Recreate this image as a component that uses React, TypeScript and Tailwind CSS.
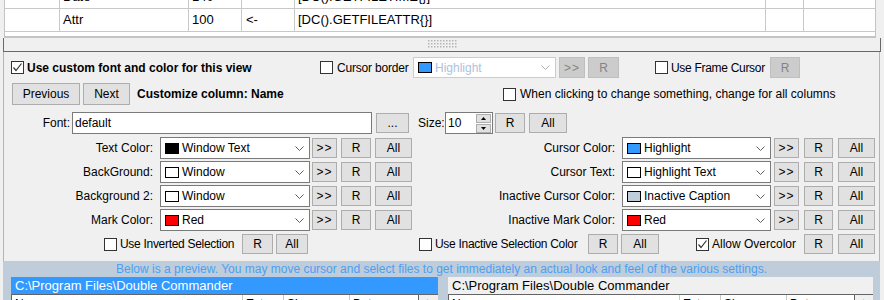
import React from "react";
import clsx from "clsx";

// ---- small win32-like controls ----

function Check({ checked = false }: { checked?: boolean }) {
  return (
    <div className="w-[13px] h-[13px] shrink-0 bg-white border border-[#333333] flex items-center justify-center">
      {checked && (
        <svg width="11" height="11" viewBox="0 0 11 11">
          <polyline points="1.5,5.5 4,8.5 9.5,1.5" fill="none" stroke="#333333" strokeWidth="1.2" />
        </svg>
      )}
    </div>
  );
}

function Btn({ className, disabled, children }: { className?: string; disabled?: boolean; children: React.ReactNode }) {
  return (
    <div
      className={clsx(
        "shrink-0 flex items-center justify-center border",
        disabled ? "bg-[#cccccc] border-[#bfbfbf] text-[#838383]" : "bg-[#e1e1e1] border-[#adadad] text-black",
        className
      )}
    >
      {children}
    </div>
  );
}

function Chevron({ color = "#606060" }: { color?: string }) {
  return (
    <svg width="9" height="5" viewBox="0 0 9 5" className="shrink-0">
      <polyline points="0.5,0.5 4.5,4.5 8.5,0.5" fill="none" stroke={color} strokeWidth="1" />
    </svg>
  );
}

function Combo({
  className,
  swatch,
  label,
  disabled,
}: {
  className?: string;
  swatch: string;
  label: string;
  disabled?: boolean;
}) {
  return (
    <div
      className={clsx(
        "shrink-0 flex items-center bg-white border",
        disabled ? "border-[#cccccc]" : "border-[#7a7a7a]",
        className
      )}
    >
      <div className="ml-[4px] w-[14px] h-[11px] border border-black shrink-0" style={{ backgroundColor: swatch }} />
      <span className={clsx("ml-[3px] flex-1 whitespace-nowrap", disabled ? "text-[#aec2dc]" : "text-black")}>{label}</span>
      <div className="mr-[5px] flex">
        <Chevron color={disabled ? "#b0b0b0" : "#606060"} />
      </div>
    </div>
  );
}

type ColorRow = { label: string; swatch: string; value: string };

const leftRows: ColorRow[] = [
  { label: "Text Color:", swatch: "#000000", value: "Window Text" },
  { label: "BackGround:", swatch: "#ffffff", value: "Window" },
  { label: "Background 2:", swatch: "#ffffff", value: "Window" },
  { label: "Mark Color:", swatch: "#ff0000", value: "Red" },
];

const rightRows: ColorRow[] = [
  { label: "Cursor Color:", swatch: "#3399ff", value: "Highlight" },
  { label: "Cursor Text:", swatch: "#ffffff", value: "Highlight Text" },
  { label: "Inactive Cursor Color:", swatch: "#bfcddb", value: "Inactive Caption" },
  { label: "Inactive Mark Color:", swatch: "#ff0000", value: "Red" },
];

// column-setup grid at the top (scrolled down, first row half hidden)
const gridRows = [
  ["", "Date", "140", "->", "[DC().GETFILETIME{}]", "", ""],
  ["", "Attr", "100", "<-", "[DC().GETFILEATTR{}]", "", ""],
];

function PreviewPanel({ active }: { active: boolean }) {
  return (
    <div className={clsx("flex flex-col shrink-0", active ? "w-[427px]" : "w-[425px]")}>
      <div
        className={clsx(
          "h-[17px] pl-[4px] flex items-center whitespace-nowrap text-[13px]",
          active ? "bg-[#3399ff] text-white" : "bg-[#f0f0f0] text-black"
        )}
      >
        C:\Program Files\Double Commander
      </div>
      <div className="flex h-[20px] bg-white border-t border-l border-[#646464]">
        <div className="w-[231px] border-r border-[#c8c8c8] pl-[3px] pt-[1px]">Name</div>
        <div className="w-[41px] border-r border-[#c8c8c8] pl-[3px] pt-[1px] overflow-hidden whitespace-nowrap">Exten</div>
        <div className="w-[66px] border-r border-[#c8c8c8] pl-[3px] pt-[1px]">Size</div>
        <div className={clsx("border-r border-[#646464] pl-[3px] pt-[1px]", active ? "w-[69px]" : "w-[68px]")}>Date</div>
        <div className="flex-1 bg-[#f0f0f0] pl-[5px]">+</div>
      </div>
    </div>
  );
}

export default function App() {
  return (
    <div className="w-[884px] h-[300px] overflow-hidden bg-[#f0f0f0] text-[12px] leading-[16px] text-black font-['Liberation_Sans',Arial,sans-serif]">
      {/* column grid */}
      <div className="ml-[4px] w-[872px] h-[38px] bg-white border-x border-b-2 border-[#c4c4c4] overflow-hidden">
        <div className="-mt-[14px]">
          {gridRows.map((r, i) => (
            <div key={i} className="flex h-[23px] border-b border-[#c8c8c8] text-[13px]">
              <div className="w-[55px] border-r border-[#c8c8c8]" />
              <div className="w-[129px] border-r border-[#c8c8c8] pl-[3px] flex items-center">{r[1]}</div>
              <div className="w-[53px] border-r border-[#c8c8c8] pl-[3px] flex items-center">{r[2]}</div>
              <div className="w-[53px] border-r border-[#c8c8c8] pl-[4px] flex items-center">{r[3]}</div>
              <div className="w-[471px] border-r border-[#c8c8c8] pl-[3px] flex items-center">{r[4]}</div>
              <div className="w-[38px] border-r border-[#c8c8c8]" />
              <div className="flex-1" />
            </div>
          ))}
        </div>
      </div>

      {/* splitter */}
      <div className="ml-[3px] w-[878px] h-[14px] border-x border-b border-[#696969] flex justify-center">
        <svg width="31" height="9" viewBox="0 0 31 9" className="mt-[2px]">
          {[0, 1, 2].map((row) =>
            Array.from({ length: 10 }).map((_, c) => (
              <rect key={`${row}-${c}`} x={c * 3 + 1} y={row * 3} width="1.5" height="1.5" fill="#b4b4b4" />
            ))
          )}
        </svg>
      </div>

      {/* options */}
      <div className="ml-[3px] w-[877px] h-[209px] border-x border-[#b4b4b4] flex flex-col">
        {/* row A */}
        <div className="flex items-center h-[21px] mt-[5px]">
          <div className="ml-[7px] w-[309px] flex items-center">
            <Check checked />
            <span className="ml-[3px] font-bold whitespace-nowrap">Use custom font and color for this view</span>
          </div>
          <div className="w-[93px] flex items-center">
            <Check />
            <span className="ml-[4px] whitespace-nowrap tracking-[-0.2px]">Cursor border</span>
          </div>
          <Combo className="w-[143px] h-[21px]" swatch="#3399ff" label="Highlight" disabled />
          <Btn className="w-[26px] h-[21px] ml-[3px] tracking-[1px]" disabled>
            {">>"}
          </Btn>
          <Btn className="w-[31px] h-[21px] ml-[3px]" disabled>
            R
          </Btn>
          <div className="ml-[36px] w-[115px] flex items-center">
            <Check />
            <span className="ml-[3px] whitespace-nowrap tracking-[-0.3px]">Use Frame Cursor</span>
          </div>
          <Btn className="w-[30px] h-[21px]" disabled>
            R
          </Btn>
        </div>

        {/* row B */}
        <div className="flex items-center h-[22px] mt-[5px]">
          <Btn className="ml-[8px] w-[68px] h-[22px]">Previous</Btn>
          <Btn className="ml-[3px] w-[47px] h-[22px]">Next</Btn>
          <div className="w-[373px] pl-[7px] font-bold whitespace-nowrap">Customize column: Name</div>
          <Check />
          <span className="ml-[4px] whitespace-nowrap">When clicking to change something, change for all columns</span>
        </div>

        {/* font row */}
        <div className="flex items-center h-[22px] mt-[7px]">
          <div className="w-[66px] text-right">Font:</div>
          <div className="ml-[2px] w-[300px] h-[22px] bg-white border border-[#7a7a7a] pl-[2px] flex items-center">default</div>
          <Btn className="ml-[4px] w-[33px] h-[20px]">...</Btn>
          <div className="ml-[9px] w-[27px]">Size:</div>
          <div className="w-[48px] h-[22px] bg-white border border-[#7a7a7a] flex items-center">
            <span className="pl-[2px] flex-1">10</span>
            <div className="mr-[1px] flex flex-col gap-[1px]">
              <div className="w-[15px] h-[9px] bg-[#e1e1e1] border border-[#adadad] flex items-center justify-center">
                <svg width="5" height="3" viewBox="0 0 5 3">
                  <polygon points="0,3 5,3 2.5,0" fill="#000" />
                </svg>
              </div>
              <div className="w-[15px] h-[9px] bg-[#e1e1e1] border border-[#adadad] flex items-center justify-center">
                <svg width="5" height="3" viewBox="0 0 5 3">
                  <polygon points="0,0 5,0 2.5,3" fill="#000" />
                </svg>
              </div>
            </div>
          </div>
          <Btn className="ml-[2px] w-[30px] h-[20px]">R</Btn>
          <Btn className="ml-[4px] w-[38px] h-[20px]">All</Btn>
        </div>

        {/* colour rows */}
        <div className="mt-[3px] flex flex-col gap-[2px]">
          {leftRows.map((l, i) => {
            const r = rightRows[i];
            return (
              <div key={l.label} className="flex items-center h-[22px]">
                <div className="w-[149px] text-right whitespace-nowrap">{l.label}</div>
                <Combo className="ml-[7px] w-[150px] h-[22px]" swatch={l.swatch} label={l.value} />
                <Btn className="ml-[2px] w-[25px] h-[20px] tracking-[1px]">{">>"}</Btn>
                <Btn className="ml-[4px] w-[30px] h-[20px]">R</Btn>
                <Btn className="ml-[4px] w-[37px] h-[20px]">All</Btn>
                <div className="w-[203px] text-right whitespace-nowrap">{r.label}</div>
                <Combo className="ml-[7px] w-[149px] h-[22px]" swatch={r.swatch} label={r.value} />
                <Btn className="ml-[3px] w-[25px] h-[20px] tracking-[1px]">{">>"}</Btn>
                <Btn className="ml-[5px] w-[29px] h-[20px]">R</Btn>
                <Btn className="ml-[5px] w-[37px] h-[20px]">All</Btn>
              </div>
            );
          })}
        </div>

        {/* row D */}
        <div className="flex items-center h-[20px] mt-[3px]">
          <div className="ml-[100px] w-[138px] flex items-center">
            <Check />
            <span className="ml-[3px] whitespace-nowrap tracking-[-0.3px]">Use Inverted Selection</span>
          </div>
          <Btn className="w-[31px] h-[20px]">R</Btn>
          <Btn className="ml-[3px] w-[32px] h-[20px]">All</Btn>
          <div className="ml-[111px] w-[169px] flex items-center">
            <Check />
            <span className="ml-[3px] whitespace-nowrap tracking-[-0.3px]">Use Inactive Selection Color</span>
          </div>
          <Btn className="w-[30px] h-[20px]">R</Btn>
          <Btn className="ml-[3px] w-[38px] h-[20px]">All</Btn>
          <div className="ml-[37px] w-[108px] flex items-center">
            <Check checked />
            <span className="ml-[3px] whitespace-nowrap">Allow Overcolor</span>
          </div>
          <Btn className="w-[29px] h-[20px]">R</Btn>
          <Btn className="ml-[5px] w-[37px] h-[20px]">All</Btn>
        </div>
      </div>

      {/* preview */}
      <div className="ml-[3px] w-[877px] h-[39px] bg-[#bfcddb] overflow-hidden">
        <div className="h-[16px] text-center text-[#4aa0f5] whitespace-nowrap">
          Below is a preview. You may move cursor and select files to get immediately an actual look and feel of the
          various settings.
        </div>
        <div className="flex ml-[8px] gap-[10px]">
          <PreviewPanel active />
          <PreviewPanel active={false} />
        </div>
      </div>
    </div>
  );
}
